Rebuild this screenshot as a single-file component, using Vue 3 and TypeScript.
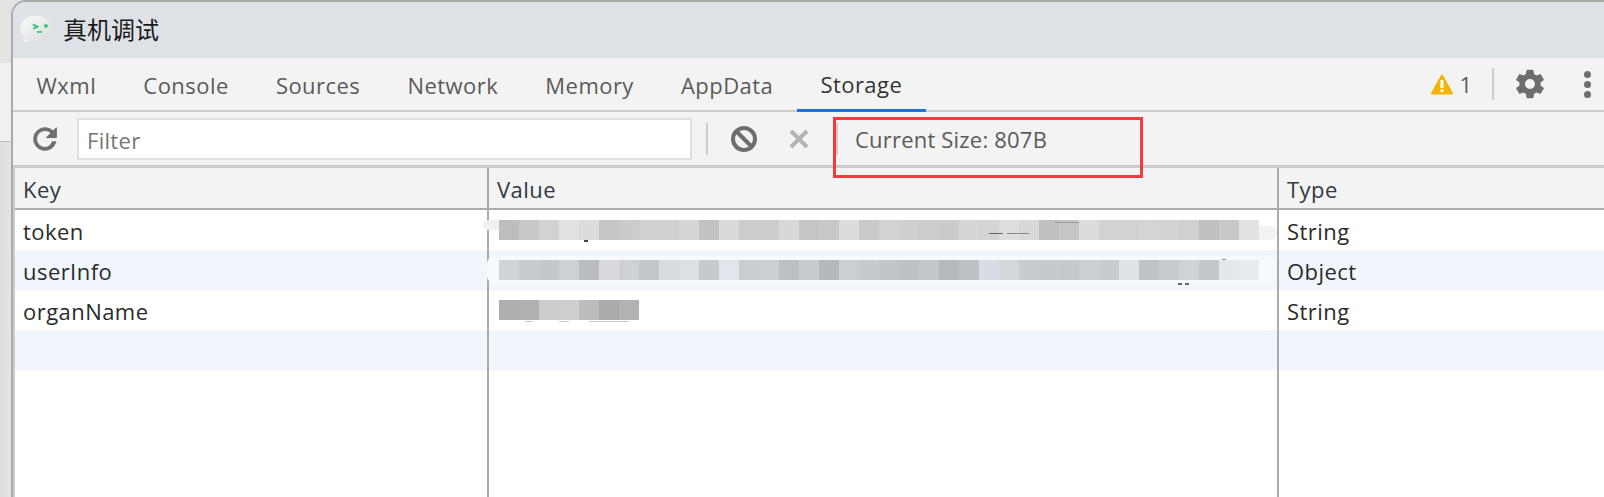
<template>
  <div class="page">
    <!-- 窗口左侧露出的桌面背景 -->
    <div class="desk">
      <div class="desk-a"></div>
      <div class="desk-b"></div>
      <div class="desk-c"></div>
    </div>

    <div class="window">
      <div class="titlebar">
        <svg class="logo" width="34" height="30" viewBox="0 0 34 30">
          <defs>
            <linearGradient id="bubble" x1="0" y1="0" x2="1" y2="1">
              <stop offset="0" stop-color="#fbfbfb" />
              <stop offset="1" stop-color="#d9dcd9" />
            </linearGradient>
          </defs>
          <ellipse cx="17" cy="13.5" rx="15.5" ry="13" fill="url(#bubble)" />
          <path d="M6 24l-1 3.5 6-2z" fill="#f4f4f4" />
          <path d="M14 9.5l4.5 2.2-4.5 2.2" fill="none" stroke="#10c060" stroke-width="1.5" />
          <path d="M18 17h5" stroke="#10c060" stroke-width="1.6" />
          <rect x="25.5" y="9.5" width="3" height="3" fill="#10c060" />
        </svg>
        <span class="title">真机调试</span>
      </div>

      <div class="tabs">
        <div
          v-for="tab in tabs"
          :key="tab"
          class="tab"
          :class="{ active: tab === 'Storage' }"
        >
          {{ tab }}
        </div>
        <div class="tabs-right">
          <svg width="22" height="21" viewBox="0 0 22 21">
            <path d="M11 1.5L21 19.5H1z" fill="#f4b400" stroke="#f4b400" stroke-width="2" stroke-linejoin="round" />
            <rect x="9.5" y="6" width="3" height="8" fill="#fff" />
            <rect x="9.5" y="15.5" width="3" height="2.6" fill="#fff" />
          </svg>
          <span class="warn-count">1</span>
          <span class="tab-sep"></span>
          <svg class="gear" width="34" height="34" viewBox="0 0 24 24">
            <path
              fill="#6e6e6e"
              d="M19.43 12.98c.04-.32.07-.64.07-.98s-.03-.66-.07-.98l2.11-1.65c.19-.15.24-.42.12-.64l-2-3.46c-.12-.22-.39-.3-.61-.22l-2.49 1c-.52-.4-1.08-.73-1.69-.98l-.38-2.65C14.46 2.18 14.25 2 14 2h-4c-.25 0-.46.18-.49.42l-.38 2.65c-.61.25-1.17.59-1.69.98l-2.49-1c-.23-.09-.49 0-.61.22l-2 3.46c-.13.22-.07.49.12.64l2.11 1.65c-.04.32-.07.65-.07.98s.03.66.07.98l-2.11 1.65c-.19.15-.24.42-.12.64l2 3.46c.12.22.39.3.61.22l2.49-1c.52.4 1.08.73 1.69.98l.38 2.65c.03.24.24.42.49.42h4c.25 0 .46-.18.49-.42l.38-2.65c.61-.25 1.17-.59 1.69-.98l2.49 1c.23.09.49 0 .61-.22l2-3.46c.12-.22.07-.49-.12-.64l-2.11-1.65zM12 15.5c-1.93 0-3.5-1.57-3.5-3.5s1.57-3.5 3.5-3.5 3.5 1.57 3.5 3.5-1.57 3.5-3.5 3.5z"
            />
          </svg>
          <div class="dots"><i></i><i></i><i></i></div>
        </div>
      </div>

      <div class="toolbar">
        <svg class="refresh" width="34" height="34" viewBox="0 0 24 24">
          <path
            fill="#6e6e6e"
            stroke="#6e6e6e"
            stroke-width="0.7"
            d="M17.65 6.35A7.96 7.96 0 0 0 12 4a8 8 0 1 0 7.73 10h-2.6A5.99 5.99 0 0 1 12 18a6 6 0 1 1 0-12c1.66 0 3.14.69 4.22 1.78L13 11h7V4l-2.35 2.35z"
          />
        </svg>
        <div class="filter">Filter</div>
        <span class="tool-sep"></span>
        <svg class="block" width="28" height="28" viewBox="0 0 28 28">
          <circle cx="14" cy="14" r="11" fill="none" stroke="#6e6e6e" stroke-width="4" />
          <path d="M6.5 6.5l15 15" stroke="#6e6e6e" stroke-width="4" />
        </svg>
        <svg class="clear" width="22" height="22" viewBox="0 0 22 22">
          <path d="M3 3l16 16M19 3L3 19" stroke="#b4b4b4" stroke-width="4" />
        </svg>
        <span class="tool-sep second"></span>
        <span class="size">Current Size: 807B</span>
      </div>

      <div class="table">
        <div class="row head">
          <div class="cell">Key</div>
          <div class="cell">Value</div>
          <div class="cell">Type</div>
        </div>
        <div
          v-for="(row, i) in rows"
          :key="i"
          class="row"
          :class="{ striped: i % 2 === 1 }"
        >
          <div class="cell">{{ row.key }}</div>
          <div class="cell value">
            <span
              v-for="(s, k) in row.smears"
              :key="k"
              class="smear"
              :style="s"
            ></span>
            <div class="mosaic">
              <i
                v-for="(c, j) in row.mosaic"
                :key="j"
                :style="{ backgroundColor: c }"
              ></i>
            </div>
            <!-- 打码后残留的文字笔画 -->
            <span
              v-for="(m, k) in row.marks"
              :key="'m' + k"
              class="mark"
              :style="m"
            ></span>
          </div>
          <div class="cell">{{ row.type }}</div>
        </div>
        <div class="row filler">
          <div class="cell"></div>
          <div class="cell"></div>
          <div class="cell"></div>
        </div>
      </div>

      <!-- 红色标注框 -->
      <div class="highlight"></div>
    </div>
  </div>
</template>

<script setup lang="ts">
type Box = Record<string, string>;

interface StorageRow {
  key: string;
  type: string;
  mosaic: string[];
  smears?: Box[];
  marks?: Box[];
}

const tabs: string[] = ['Wxml', 'Console', 'Sources', 'Network', 'Memory', 'AppData', 'Storage'];

// 把灰度值列表转成颜色
const gray = (list: number[]): string[] =>
  list.map((v) => `rgb(${v},${v},${v})`);

// 相对 value 单元格的矩形
const box = (left: number, top: number, width: number, height: number, background?: string): Box => ({
  left: `${left}px`,
  top: `${top}px`,
  width: `${width}px`,
  height: `${height}px`,
  ...(background ? { background } : {}),
});

const rows: StorageRow[] = [
  {
    key: 'token',
    type: 'String',
    mosaic: gray([
      189, 200, 210, 226, 220, 198, 203, 208, 208, 214, 194, 218, 204, 204, 216, 198, 200, 220, 202,
      210, 207, 204, 203, 214, 212, 222, 216, 192, 198, 220, 210, 210, 212, 210, 208, 192, 200, 226,
    ]),
    smears: [box(-6, 10, 20, 10, '#f0f0f0'), box(750, 16, 38, 14, '#f2f2f2')],
    marks: [
      box(95, 30, 4, 2, '#444'),
      box(500, 23, 14, 1, '#666'),
      box(518, 23, 22, 1, '#888'),
      box(566, 12, 24, 1, '#999'),
    ],
  },
  {
    key: 'userInfo',
    type: 'Object',
    mosaic: [
      '#d0d3d7', '#c9cccf', '#c4c7cb', '#cdd0d4', '#b9bcc0', '#d8dae0', '#ced1d5', '#c3c6ca', '#d8dbdf',
      '#dcdfe5', '#c6c9cd', '#e2e5eb', '#c9ccd0', '#cbced2', '#bcbfc3', '#c8cbcf', '#b5b8bc', '#cbced2',
      '#c6c9cd', '#c2c5c9', '#bdc0c4', '#c4c7cb', '#b6b9bd', '#bdc0c4', '#d9dce4', '#d4d7db', '#c8cbcf',
      '#c6c9cd', '#c5c8cc', '#cbced2', '#c8cbcf', '#dfe2e6', '#bfc2c6', '#c8cbcf', '#cfd2d6', '#c4c7cb',
      '#e4e7ec', '#e8ebf0',
    ],
    smears: [box(-2, 6, 788, 28, '#f6f9fe')],
    marks: [box(689, 33, 4, 2, '#666'), box(696, 33, 4, 2, '#666'), box(733, 9, 4, 1, '#888')],
  },
  {
    key: 'organName',
    type: 'String',
    mosaic: gray([174, 176, 204, 206, 188, 170, 178]),
    marks: [box(36, 31, 8, 1, '#ccc'), box(70, 31, 10, 1, '#ccc'), box(100, 31, 40, 1, '#ccc')],
  },
  { key: '', type: '', mosaic: [] },
];
</script>

<style>
html,
body {
  margin: 0;
  background: #e4e4e4;
}
</style>

<style scoped>
.page {
  display: flex;
  width: 1604px;
  height: 497px;
  overflow: hidden;
  font-family: "Open Sans", "Noto Sans CJK SC", sans-serif;
}

.desk {
  display: flex;
  flex-direction: column;
  width: 11px;
  flex-shrink: 0;
}

.desk-a {
  height: 63px;
  background: #e3e3e3;
}

.desk-b {
  height: 78px;
  background: #f0f0f0;
  border-bottom: 1px solid #bbb;
}

.desk-c {
  flex: 1;
  background: linear-gradient(90deg, #dedede, #e4e4e4);
}

.window {
  position: relative;
  flex: 1;
  display: flex;
  flex-direction: column;
  min-width: 0;
  border-top: 2px solid #aaa;
  border-left: 2px solid #aaa;
  border-top-left-radius: 15px;
  overflow: hidden;
  background: #fff;
}

.titlebar {
  display: flex;
  align-items: center;
  height: 56px;
  flex-shrink: 0;
  background: #dee1e6;
  padding-left: 6px;
  box-sizing: border-box;
}

.title {
  margin-left: 10px;
  padding-bottom: 4px;
  font-family: "Noto Sans CJK SC", sans-serif;
  font-size: 24px;
  color: #1a1a1a;
}

.tabs {
  display: flex;
  height: 54px;
  flex-shrink: 0;
  background: #f3f3f3;
  border-bottom: 2px solid #ccc;
  box-sizing: border-box;
}

.tab {
  display: flex;
  align-items: center;
  height: 54px;
  padding: 0 23.6px;
  box-sizing: border-box;
  font-size: 22px;
  letter-spacing: 0.45px;
  color: #5a5a5a;
}

.tab.active {
  color: #333;
  border-bottom: 3px solid #1a73e8;
  padding-top: 1px;
}

.tabs-right {
  display: flex;
  align-items: center;
  margin-left: auto;
  padding-right: 13px;
  height: 52px;
}

.warn-count {
  margin-left: 6px;
  font-size: 22px;
  color: #5a5a5a;
}

.tab-sep {
  width: 2px;
  height: 32px;
  margin-left: 20px;
  background: #ccc;
}

.gear {
  margin-left: 19px;
}

.dots {
  display: flex;
  flex-direction: column;
  gap: 3px;
  margin-left: 37px;
}

.dots i {
  width: 7px;
  height: 7px;
  border-radius: 50%;
  background: #6e6e6e;
}

.toolbar {
  display: flex;
  align-items: center;
  height: 56px;
  flex-shrink: 0;
  background: #f3f3f3;
  border-bottom: 3px solid #ccc;
  box-sizing: border-box;
}

.refresh {
  margin-left: 15px;
}

.filter {
  display: flex;
  align-items: center;
  width: 615px;
  height: 42px;
  margin-left: 15px;
  padding: 2px 0 0 8px;
  box-sizing: border-box;
  background: #fff;
  border: 2px solid #e0e0e0;
  font-size: 22px;
  letter-spacing: 0.3px;
  color: #757575;
}

.tool-sep {
  width: 2px;
  height: 32px;
  margin-left: 14px;
  background: #ccc;
}

.block {
  margin-left: 22px;
}

.clear {
  margin-left: 30px;
}

.tool-sep.second {
  margin-left: 26px;
}

.size {
  margin-left: 17px;
  font-size: 22px;
  letter-spacing: 0.2px;
  color: #5a5a5a;
}

.table {
  flex: 1;
  display: flex;
  flex-direction: column;
  border-left: 2px solid #ccc;
  min-height: 0;
}

.row {
  display: grid;
  grid-template-columns: 474px 790px 1fr;
  height: 40px;
  flex-shrink: 0;
}

.row.head {
  height: 42px;
  background: #f3f3f3;
  border-bottom: 2px solid #aaa;
  box-sizing: border-box;
}

.row.head .cell {
  color: #303942;
}

.row.striped {
  background: #f1f6fd;
}

.row.filler {
  flex: 1;
}

.cell {
  position: relative;
  display: flex;
  align-items: center;
  padding: 2px 0 0 8px;
  box-sizing: border-box;
  border-right: 2px solid #aaa;
  font-size: 22px;
  letter-spacing: 0.45px;
  color: #2b2b2b;
}

.cell:last-child {
  border-right: none;
}

.cell.value {
  padding-top: 0;
}

.smear {
  position: absolute;
  border-radius: 8px;
}

.mark {
  position: absolute;
}

.mosaic {
  position: relative;
  display: flex;
  padding-left: 2px;
}

.mosaic i {
  width: 20px;
  height: 20px;
  flex-shrink: 0;
}

.highlight {
  position: absolute;
  left: 820px;
  top: 115px;
  width: 310px;
  height: 61px;
  box-sizing: border-box;
  border: 3px solid #f43a3a;
}
</style>
